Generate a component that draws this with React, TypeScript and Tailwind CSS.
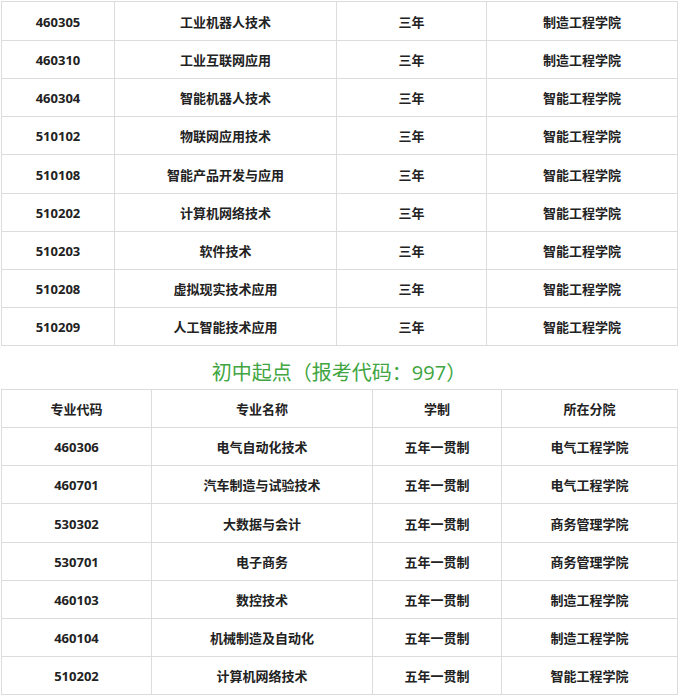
type Row = [string, string, string, string];

const upper: Row[] = [
  ['460305', '工业机器人技术', '三年', '制造工程学院'],
  ['460310', '工业互联网应用', '三年', '制造工程学院'],
  ['460304', '智能机器人技术', '三年', '智能工程学院'],
  ['510102', '物联网应用技术', '三年', '智能工程学院'],
  ['510108', '智能产品开发与应用', '三年', '智能工程学院'],
  ['510202', '计算机网络技术', '三年', '智能工程学院'],
  ['510203', '软件技术', '三年', '智能工程学院'],
  ['510208', '虚拟现实技术应用', '三年', '智能工程学院'],
  ['510209', '人工智能技术应用', '三年', '智能工程学院'],
];

const lower: Row[] = [
  ['专业代码', '专业名称', '学制', '所在分院'],
  ['460306', '电气自动化技术', '五年一贯制', '电气工程学院'],
  ['460701', '汽车制造与试验技术', '五年一贯制', '电气工程学院'],
  ['530302', '大数据与会计', '五年一贯制', '商务管理学院'],
  ['530701', '电子商务', '五年一贯制', '商务管理学院'],
  ['460103', '数控技术', '五年一贯制', '制造工程学院'],
  ['460104', '机械制造及自动化', '五年一贯制', '制造工程学院'],
  ['510202', '计算机网络技术', '五年一贯制', '智能工程学院'],
];

const cell = 'border border-[#dcdcdc] p-0 pt-[3px] text-center align-middle';

function Table({ rows, cols, tall }: { rows: Row[]; cols: string[]; tall: number[] }) {
  return (
    <table className="ml-[1px] w-[676px] table-fixed border-collapse text-[13px] font-semibold text-[#222]">
      <colgroup>
        {cols.map((c, i) => (
          <col key={i} className={c} />
        ))}
      </colgroup>
      <tbody>
        {rows.map((r, i) => (
          <tr key={i} className={tall.includes(i) ? 'h-[39px]' : 'h-[38px]'}>
            {r.map((v, j) => (
              <td key={j} className={j === 0 && /^\d/.test(v) ? cell + ' font-bold' : cell}>
                {v}
              </td>
            ))}
          </tr>
        ))}
      </tbody>
    </table>
  );
}

export default function App() {
  return (
    <div className="h-[700px] w-[678px] overflow-hidden bg-white pt-[1px] font-['Open_Sans','Noto_Sans_CJK_SC',sans-serif]">
      <Table rows={upper} cols={['w-[113px]', 'w-[222px]', 'w-[150px]', 'w-[191px]']} tall={[0, 4]} />
      <div className="flex h-[43px] items-center justify-center pt-[10px] text-[20px] leading-none text-[#41a541]">
        初中起点（报考代码：997）
      </div>
      <Table rows={lower} cols={['w-[150px]', 'w-[221px]', 'w-[129px]', 'w-[176px]']} tall={[3]} />
    </div>
  );
}
